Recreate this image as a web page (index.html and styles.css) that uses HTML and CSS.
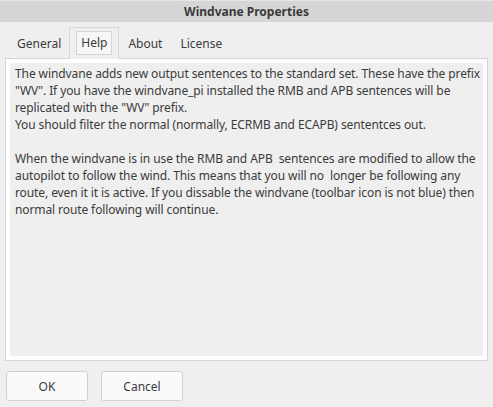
FILE: index.html
```
<!DOCTYPE html>
<html>
<head>
<meta charset="utf-8">
<link rel="stylesheet" href="styles.css">
</head>
<body>
<div class="dialog">
  <div class="titlebar">Windvane Properties</div>
  <div class="tabs">
    <div class="tab first">General</div>
    <div class="tab active"><span class="focus">Help</span></div>
    <div class="tab">About</div>
    <div class="tab">License</div>
  </div>
  <div class="panel">
    <div class="text">
      <div class="line">The windvane adds new output sentences to the standard set. These have the prefix</div>
      <div class="line">"WV". If you have the windvane_pi installed the RMB and APB sentences will be</div>
      <div class="line">replicated with the "WV" prefix.</div>
      <div class="line">You should filter the normal (normally, ECRMB and ECAPB) sententces out.</div>
      <div class="line">&nbsp;</div>
      <div class="line">When the windvane is in use the RMB and APB&nbsp; sentences are modified to allow the</div>
      <div class="line">autopilot to follow the wind. This means that you will no&nbsp; longer be following any</div>
      <div class="line">route, even it it is active. If you dissable the windvane (toolbar icon is not blue) then</div>
      <div class="line">normal route following will continue.</div>
    </div>
  </div>
  <div class="buttons">
    <button class="btn">OK</button>
    <button class="btn">Cancel</button>
  </div>
</div>
</body>
</html>
```
FILE: styles.css
```
html, body {
  margin: 0;
  padding: 0;
  background: #efefef;
}
body {
  font-family: "Noto Sans", "Open Sans", sans-serif;
  font-size: 12px;
  color: #3b3b3b;
}
.dialog {
  width: 493px;
  height: 407px;
  display: flex;
  flex-direction: column;
  overflow: hidden;
}
.titlebar {
  height: 22px;
  line-height: 22px;
  background: #d6d6d6;
  border-top: 1px solid #e6e6e6;
  box-sizing: border-box;
  text-align: center;
  font-weight: bold;
  color: #3a3a3a;
}
.tabs {
  display: flex;
  align-items: flex-end;
  height: 36px;
  padding-left: 8px;
  box-sizing: border-box;
}
.tab {
  height: 30px;
  line-height: 31px;
  padding: 0 9px;
  box-sizing: border-box;
}
.tab.first {
  padding-left: 9px;
  padding-right: 8px;
}
.tab.active {
  border: 1px solid #d9d9d9;
  border-bottom: none;
  height: 32px;
  padding: 3px 6px 0 6px;
  line-height: 22px;
  margin-bottom: -1px;
  background: #efefef;
  position: relative;
  z-index: 1;
}
.focus {
  display: block;
  border: 1px solid #d4d4d4;
  background: #f6f6f6;
  padding: 0 4px;
  height: 24px;
  box-sizing: border-box;
}
.panel {
  margin-left: 5px;
  width: 483px;
  height: 303px;
  box-sizing: border-box;
  border: 1px solid #d4d4d4;
  padding: 4px;
  background: #fff;
}
.text {
  background: #efefef;
  height: 100%;
  padding: 2px 0 0 5px;
  box-sizing: border-box;
  line-height: 17px;
  letter-spacing: -0.1px;
  overflow: hidden;
}
.line {
  white-space: nowrap;
  height: 17px;
}
.buttons {
  display: flex;
  gap: 13px;
  padding: 10px 6px 0 6px;
}
.btn {
  width: 82px;
  height: 30px;
  border: 1px solid #d0d0d0;
  border-radius: 3px;
  background: #fafafa;
  font-family: "Noto Sans", "Open Sans", sans-serif;
  font-size: 12px;
  color: #3b3b3b;
  padding: 0;
}
```
